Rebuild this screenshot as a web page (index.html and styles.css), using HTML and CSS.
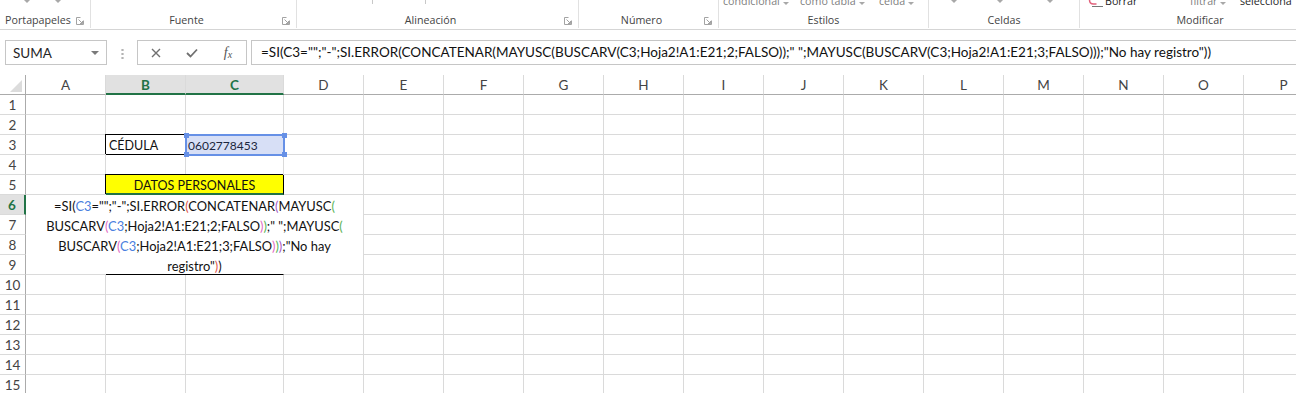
FILE: index.html
```html
<!DOCTYPE html>
<html lang="es">
<head>
    <meta charset="UTF-8">
    <meta name="viewport" content="width=device-width, initial-scale=1.0">
    <title>Libro1 - Excel</title>
    <link rel="stylesheet" href="styles.css">
</head>
<body>
    <!-- Cinta de opciones (solo se ve la parte de abajo) -->
    <div class="ribbon">
        <div class="group w-clip">
            <div class="g-top top-clip"><i class="dd"></i><i class="dd"></i></div>
            <div class="g-label"><span>Portapapeles</span>
                <svg class="launch" viewBox="0 0 8 8"><path d="M.5 7.5V.5h4M7.5 3.5v4h-7M2.5 2.5l4 4M6.5 4v2.5H4" fill="none" stroke="#a3a3a3"/></svg>
            </div>
        </div>
        <div class="group w-font">
            <div class="g-top"></div>
            <div class="g-label"><span>Fuente</span>
                <svg class="launch" viewBox="0 0 8 8"><path d="M.5 7.5V.5h4M7.5 3.5v4h-7M2.5 2.5l4 4M6.5 4v2.5H4" fill="none" stroke="#a3a3a3"/></svg>
            </div>
        </div>
        <div class="group w-align">
            <div class="g-top top-align"><i class="tick"></i><i class="tick"></i></div>
            <div class="g-label"><span>Alineación</span>
                <svg class="launch" viewBox="0 0 8 8"><path d="M.5 7.5V.5h4M7.5 3.5v4h-7M2.5 2.5l4 4M6.5 4v2.5H4" fill="none" stroke="#a3a3a3"/></svg>
            </div>
        </div>
        <div class="group w-num">
            <div class="g-top"></div>
            <div class="g-label"><span>Número</span>
                <svg class="launch" viewBox="0 0 8 8"><path d="M.5 7.5V.5h4M7.5 3.5v4h-7M2.5 2.5l4 4M6.5 4v2.5H4" fill="none" stroke="#a3a3a3"/></svg>
            </div>
        </div>
        <div class="group w-styles">
            <div class="g-top top-styles">
                <span class="t st1">condicional <i class="dd"></i></span>
                <span class="t st2">como tabla <i class="dd"></i></span>
                <span class="t">celda <i class="dd"></i></span>
            </div>
            <div class="g-label"><span>Estilos</span></div>
        </div>
        <div class="group w-cells">
            <div class="g-top top-cells"><i class="dd"></i><i class="dd dd-2"></i><i class="dd dd-3"></i></div>
            <div class="g-label"><span>Celdas</span></div>
        </div>
        <div class="group w-edit">
            <div class="g-top top-edit">
                <svg class="eraser" viewBox="0 0 16 7"><path d="M1.5 0c0 3 1.5 4 4 4h3" fill="none" stroke="#e2627c" stroke-width="1.5"/><path d="M4 6.5h11" stroke="#777"/></svg>
                <span class="t dark borrar">Borrar</span>
                <span class="t filtrar">filtrar <i class="dd"></i></span>
                <span class="t dark">selecciona</span>
            </div>
            <div class="g-label"><span>Modificar</span></div>
        </div>
    </div>

    <!-- Barra de fórmulas -->
    <div class="fbar">
        <div class="namebox"><span>SUMA</span><i class="dd"></i></div>
        <div class="grip"></div>
        <div class="fbtns">
            <span><svg width="10" height="10" viewBox="0 0 10 10"><path d="M1 1l8 8M9 1L1 9" stroke="#707070" stroke-width="1.4"/></svg></span>
            <span><svg width="12" height="10" viewBox="0 0 12 10"><path d="M1 5l3.5 3.5L11 1.5" fill="none" stroke="#707070" stroke-width="1.8"/></svg></span>
            <span class="fx">f<small>x</small></span>
        </div>
        <div class="finput">=SI(C3="";"-";SI.ERROR(CONCATENAR(MAYUSC(BUSCARV(C3;Hoja2!A1:E21;2;FALSO));" ";MAYUSC(BUSCARV(C3;Hoja2!A1:E21;3;FALSO)));"No hay registro"))</div>
    </div>

    <!-- Hoja -->
    <div class="sheet">
        <div class="corner"><i class="tri"></i></div>
        <div class="ch">A</div><div class="ch on">B</div><div class="ch on">C</div><div class="ch">D</div>
        <div class="ch">E</div><div class="ch">F</div><div class="ch">G</div><div class="ch">H</div>
        <div class="ch">I</div><div class="ch">J</div><div class="ch">K</div><div class="ch">L</div>
        <div class="ch">M</div><div class="ch">N</div><div class="ch">O</div><div class="ch">P</div>

        <div class="rh">1</div>
        <div></div><div></div><div></div><div></div><div></div><div></div><div></div><div></div>
        <div></div><div></div><div></div><div></div><div></div><div></div><div></div><div></div>

        <div class="rh">2</div>
        <div></div><div></div><div></div><div></div><div></div><div></div><div></div><div></div>
        <div></div><div></div><div></div><div></div><div></div><div></div><div></div><div></div>

        <div class="rh">3</div>
        <div></div>
        <div class="boxed">CÉDULA</div>
        <div class="ref">0602778453<i class="hd h-tl"></i><i class="hd h-tr"></i><i class="hd h-bl"></i><i class="hd h-br"></i></div>
        <div></div><div></div><div></div><div></div><div></div><div></div><div></div>
        <div></div><div></div><div></div><div></div><div></div><div></div>

        <div class="rh">4</div>
        <div></div><div></div><div></div><div></div><div></div><div></div><div></div><div></div>
        <div></div><div></div><div></div><div></div><div></div><div></div><div></div><div></div>

        <div class="rh">5</div>
        <div></div>
        <div class="title">DATOS PERSONALES</div>
        <div></div><div></div><div></div><div></div><div></div><div></div><div></div>
        <div></div><div></div><div></div><div></div><div></div><div></div>

        <div class="rh on">6</div>
        <div></div>
        <div class="merge">
            <div class="editor">
                =SI(<span class="c3">C3</span>="";"-";SI.ERROR<span class="p2">(</span>CONCATENAR<span class="p3">(</span>MAYUSC<span class="p4">(</span><br>
                BUSCARV<span class="p5">(</span><span class="c3">C3</span>;Hoja2!A1:E21;2;FALSO<span class="p5">)</span><span class="p4">)</span>;" ";MAYUSC<span class="p4">(</span><br>
                BUSCARV<span class="p5">(</span><span class="c3">C3</span>;Hoja2!A1:E21;3;FALSO<span class="p5">)</span><span class="p4">)</span><span class="p3">)</span>;"No hay<br>
                registro"<span class="p2">)</span>)
            </div>
        </div>
        <div></div><div></div><div></div><div></div><div></div><div></div><div></div>
        <div></div><div></div><div></div><div></div><div></div><div></div>

        <div class="rh">7</div>
        <div></div>
        <div></div><div></div><div></div><div></div><div></div><div></div><div></div>
        <div></div><div></div><div></div><div></div><div></div><div></div>

        <div class="rh">8</div>
        <div></div>
        <div></div><div></div><div></div><div></div><div></div><div></div><div></div>
        <div></div><div></div><div></div><div></div><div></div><div></div>

        <div class="rh">9</div>
        <div></div>
        <div></div><div></div><div></div><div></div><div></div><div></div><div></div>
        <div></div><div></div><div></div><div></div><div></div><div></div>

        <div class="rh">10</div>
        <div></div><div></div><div></div><div></div><div></div><div></div><div></div><div></div>
        <div></div><div></div><div></div><div></div><div></div><div></div><div></div><div></div>

        <div class="rh">11</div>
        <div></div><div></div><div></div><div></div><div></div><div></div><div></div><div></div>
        <div></div><div></div><div></div><div></div><div></div><div></div><div></div><div></div>

        <div class="rh">12</div>
        <div></div><div></div><div></div><div></div><div></div><div></div><div></div><div></div>
        <div></div><div></div><div></div><div></div><div></div><div></div><div></div><div></div>

        <div class="rh">13</div>
        <div></div><div></div><div></div><div></div><div></div><div></div><div></div><div></div>
        <div></div><div></div><div></div><div></div><div></div><div></div><div></div><div></div>

        <div class="rh">14</div>
        <div></div><div></div><div></div><div></div><div></div><div></div><div></div><div></div>
        <div></div><div></div><div></div><div></div><div></div><div></div><div></div><div></div>

        <div class="rh">15</div>
        <div></div><div></div><div></div><div></div><div></div><div></div><div></div><div></div>
        <div></div><div></div><div></div><div></div><div></div><div></div><div></div><div></div>
    </div>
</body>
</html>
```

FILE: styles.css
```css
/* Excel 2013 look */
* {
    box-sizing: border-box;
}
body {
    margin: 0;
    width: 1296px;
    height: 393px;
    overflow: hidden;
    background: #fff;
    color: #222;
    font-family: Lato, "Liberation Sans", sans-serif;
}

/* ribbon */
.ribbon {
    display: flex;
    height: 30px;
    border-bottom: 1px solid #d5d5d5;
    overflow: hidden;
    font-family: "Open Sans", "Liberation Sans", sans-serif;
    font-size: 10.7px;
    color: #444;
}
.group {
    flex: none;
    height: 28px;
    display: flex;
    flex-direction: column;
    border-right: 1px solid #e1e1e1;
}
.w-clip { width: 91px; }
.w-font { width: 206px; }
.w-align { width: 282px; }
.w-num { width: 140px; }
.w-styles { width: 210px; }
.w-cells { width: 151px; }
.w-edit { width: 240px; border-right: 0; }

.g-top {
    height: 12px;
    display: flex;
    align-items: flex-start;
    white-space: nowrap;
    color: #808080;
}
.g-top .t {
    display: flex;
    align-items: center;
    gap: 3px;
    line-height: 12px;
    margin-top: -5px;
}
.g-top .dark { color: #262626; }
.g-label {
    height: 16px;
    display: flex;
    align-items: center;
}
.g-label span {
    flex: 1;
    text-align: center;
    line-height: 16px;
}
.launch {
    flex: none;
    width: 8px;
    height: 8px;
    margin: 2px 6px 0 0;
}
.dd {
    display: inline-block;
    width: 0;
    height: 0;
    border-left: 3px solid transparent;
    border-right: 3px solid transparent;
    border-top: 3px solid #a8a8a8;
}
.g-top .t .dd { margin-top: 4px; }
.top-clip { padding-left: 24px; gap: 25px; }
.top-align { padding-left: 75px; gap: 52px; }
.tick {
    width: 1px;
    height: 4px;
    background: #c8c8c8;
}
.top-styles { padding-left: 4px; }
.st1 { width: 77px; }
.st2 { width: 79px; }
.top-cells { padding-left: 22px; }
.dd-2 { margin-left: 40px; }
.dd-3 { margin-left: 44px; }
.top-edit { padding-left: 8px; }
.eraser { width: 16px; height: 7px; }
.borrar { margin-left: 1px; width: 85px; }
.filtrar { width: 50px; }

/* formula bar */
.fbar {
    display: flex;
    height: 45px;
    padding: 10px 0 0 5px;
}
.namebox {
    flex: none;
    width: 102px;
    height: 25px;
    border: 1px solid #c6c6c6;
    display: flex;
    align-items: center;
    justify-content: space-between;
    padding: 0 7px;
    font-size: 13.5px;
    color: #262626;
}
.namebox .dd {
    border-width: 4px 4px 0;
    border-top-color: #7a7a7a;
}
.grip {
    flex: none;
    width: 3px;
    height: 11px;
    margin: 8px 13px 0 14px;
    background: radial-gradient(circle, #b3b3b3 1px, transparent 1.3px) 0 0 / 3px 4px;
}
.fbtns {
    flex: none;
    width: 110px;
    height: 25px;
    border: 1px solid #c6c6c6;
    display: flex;
}
.fbtns span {
    flex: 1;
    display: flex;
    align-items: center;
    justify-content: center;
}
.fx {
    font-family: "Liberation Serif", serif;
    font-style: italic;
    font-size: 14px;
    color: #555;
}
.fx small {
    font-size: 10px;
    margin-top: 3px;
}
.finput {
    flex: none;
    width: 1060px;
    height: 25px;
    margin-left: 4px;
    border: 1px solid #c6c6c6;
    padding-left: 9px;
    font-size: 13.5px;
    line-height: 23px;
    white-space: nowrap;
    color: #111;
}

/* sheet grid */
.sheet {
    display: grid;
    grid-template-columns: 26px 80px 80px 98px repeat(13, 80px);
    grid-auto-rows: 20px;
    font-size: 12.5px;
}
.sheet > div {
    border-right: 1px solid #dadada;
    border-bottom: 1px solid #dadada;
    line-height: 22px;
    white-space: nowrap;
}
.sheet > .corner {
    display: flex;
    align-items: flex-end;
    justify-content: flex-end;
    padding: 0 3px 2px 0;
    border-right-color: #ababab;
    border-bottom-color: #ababab;
}
.tri {
    width: 12px;
    height: 12px;
    background: #dcdcdc;
    clip-path: polygon(100% 0, 100% 100%, 0 100%);
}
.sheet > .ch,
.sheet > .rh {
    text-align: center;
    color: #444;
    font-size: 13.5px;
    line-height: 21px;
}
.sheet > .ch {
    border-bottom-color: #ababab;
}
.sheet > .rh {
    border-right-color: #ababab;
}
.sheet > .ch.on {
    background: #e1e1e1;
    color: #217346;
    font-weight: 700;
    border-bottom: 2px solid #217346;
    line-height: 20px;
}
.sheet > .rh.on {
    background: #e1e1e1;
    color: #217346;
    font-weight: 700;
    border-right: 2px solid #217346;
}
.sheet > .boxed {
    padding-left: 3px;
    color: #111;
    border-right-color: #000;
    border-bottom-color: #000;
    box-shadow: -1px -1px 0 #000;
}
.sheet > .ref {
    position: relative;
    padding-left: 2px;
    font-size: 12px;
    background: #d7dff6;
    color: #1c2640;
    outline: 2px solid #6690e6;
    outline-offset: -1px;
}
.hd {
    position: absolute;
    width: 5px;
    height: 5px;
    background: #6690e6;
}
.h-tl { left: -2px; top: -2px; }
.h-tr { right: -4px; top: -2px; }
.h-bl { left: -2px; bottom: -3px; }
.h-br { right: -4px; bottom: -3px; }
.sheet > .title {
    grid-column: span 2;
    text-align: center;
    line-height: 21px;
    background: #ffff00;
    color: #111;
    border-right-color: #000;
    border-bottom: 2px solid #217346;
    box-shadow: -1px -1px 0 #000;
}
.sheet > .merge {
    grid-column: span 2;
    grid-row: span 4;
    position: relative;
    background: #fff;
    border-bottom-color: #000;
}
.editor {
    position: absolute;
    z-index: 2;
    top: 0;
    bottom: 0;
    left: -80px;
    right: -80px;
    padding-top: 1px;
    background: #fff;
    font-size: 12.9px;
    text-align: center;
    line-height: 20px;
    color: #111;
}
.c3 { color: #4a7fe0; }
.p2 { color: #e2574c; }
.p3 { color: #a65ac6; }
.p4 { color: #58b458; }
.p5 { color: #df6bc4; }
```
